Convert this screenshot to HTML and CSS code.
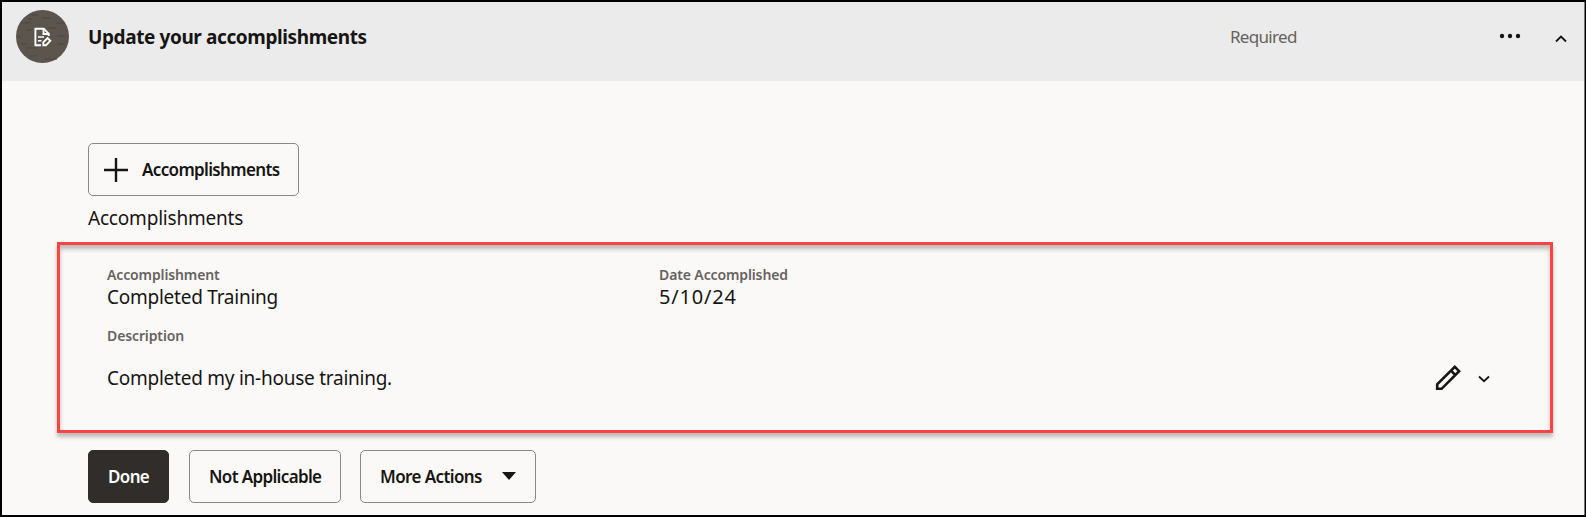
FILE: index.html
```html
<!DOCTYPE html>
<html lang="en">
  <head>
    <meta charset="UTF-8" />
    <title>Update your accomplishments</title>
    <link rel="stylesheet" href="styles.css">
  </head>
  <body>
  <div class="task">
    <header class="task-header">
      <svg class="task-icon" width="53" height="53" viewBox="0 0 53 53">
        <circle cx="26.500" cy="26.500" r="26.500" fill="#5b554e" />
        <g stroke="#4b463f" stroke-width="1.200" fill="none">
          <path d="M15 5h7M26 8h8M5 13h10M32 18h8M10 20h6M40 13h8M41 26h8M2 27h3M5 34h6M42 34h7M10 38h12M14 46h7M29 49h12M12 9h4" />
        </g>
        <g fill="none" stroke="#fff" stroke-width="1.900">
          <path d="M25 35.200H19.400V18.700H27.700L32.800 23.800V26" />
          <path d="M27.500 18.700V24H32.800" />
          <path d="M22 26.900h6M22 30.700h3.500" stroke-width="1.500" />
          <path d="M27.300 35.300V32.400L31.600 28.100L34.300 30.800L29.900 35.300Z" />
        </g>
      </svg>
      <h1 class="task-title">Update your accomplishments</h1>
      <span class="task-status">Required</span>
      <svg class="task-more" width="22" height="6" viewBox="0 0 22 6" fill="#161513">
        <circle cx="3" cy="3" r="2.200" /><circle cx="11" cy="3" r="2.200" /><circle cx="19" cy="3" r="2.200" />
      </svg>
      <svg class="task-toggle" width="12" height="8" viewBox="0 0 12 8">
        <path d="M1 6.500L6 1.500L11 6.500" />
      </svg>
    </header>

    <main class="task-body">
      <button class="btn btn-add">
        <svg width="24" height="24" viewBox="0 0 24 24"><path d="M12 0V24M0 12H24" stroke="#161513" stroke-width="2.400" /></svg>
        <span>Accomplishments</span>
      </button>
      <h2 class="section-title">Accomplishments</h2>

      <section class="record">
        <div class="record-fields">
          <div class="field">
            <div class="label">Accomplishment</div>
            <div class="value">Completed Training</div>
          </div>
          <div class="field">
            <div class="label">Date Accomplished</div>
            <div class="value value-date">5/10/24</div>
          </div>
        </div>
        <div class="label label-description">Description</div>
        <div class="record-row">
          <div class="value">Completed my in-house training.</div>
          <div class="record-actions">
            <svg class="pencil" width="26" height="26" viewBox="0 0 26 26">
              <path d="M2.200 23.800V19.400L19.800 1.900L24.100 6.200L6.600 23.800ZM16 5.700L20.300 10" />
            </svg>
            <svg class="chevron" width="12" height="8" viewBox="0 0 12 8">
              <path d="M1 1.500L6 6.200L11 1.500" />
            </svg>
          </div>
        </div>
      </section>

      <div class="actions">
        <button class="btn btn-done"><span>Done</span></button>
        <button class="btn btn-na"><span>Not Applicable</span></button>
        <button class="btn btn-menu"><span>More Actions</span>
          <svg width="14" height="8" viewBox="0 0 14 8"><path d="M0 0H14L7 8Z" fill="#161513" /></svg>
        </button>
      </div>
    </main>
  </div>
  </body>
</html>
```
FILE: styles.css
```css
* {
  box-sizing: border-box;
}
body {
  margin: 0;
  font-family: "Noto Sans", "Open Sans", sans-serif;
  color: #161513;
}
h1, h2 {
  margin: 0;
}
svg {
  display: block;
  flex: none;
}

.task {
  height: 517px;
  border: 2px solid #000;
  border-right-width: 1px;
  background-color: #fbf9f8;
  box-shadow: inset -1px 0 #777;
  white-space: nowrap;
}

/* header */
.task-header {
  display: flex;
  height: 79px;
  margin-right: 1px;
  padding: 8px 17px 0 14px;
  background-color: #ebebeb;
}
.task-title {
  width: 1142px;
  margin-left: 19px;
  padding-top: 13px;
  font-size: 19px;
  line-height: 28px;
  font-weight: 700;
  letter-spacing: -.4px;
}
.task-status {
  width: 269px;
  padding-top: 14px;
  font-size: 17px;
  line-height: 26px;
  letter-spacing: -.7px;
  color: #66625f;
}
.task-more {
  margin-top: 23px;
}
.task-toggle {
  margin: 25px 0 0 auto;
}
.task-toggle path,
.chevron path {
  fill: none;
  stroke: #161513;
  stroke-width: 1.8;
}

/* buttons */
.btn {
  display: flex;
  align-items: center;
  height: 53px;
  padding: 0 19px;
  border: 1px solid #8b8785;
  border-radius: 5px;
  background: transparent;
  font-family: inherit;
  font-size: 17px;
  line-height: 24px;
  font-weight: 600;
  letter-spacing: -.65px;
  color: #161513;
}
.btn-add {
  width: 211px;
  padding: 0 0 0 15px;
  gap: 14px;
}
.btn-add span {
  padding-top: 1px;
}
.btn-done {
  width: 81px;
  border-color: #312d2a;
  background-color: #312d2a;
  color: #fff;
}
.btn-na {
  width: 152px;
  margin-left: 20px;
}
.btn-menu {
  width: 176px;
  margin-left: 19px;
  justify-content: space-between;
  letter-spacing: -.6px;
}
.btn-menu svg {
  margin-bottom: 2px;
}

/* content */
.task-body {
  padding: 62px 31px 0 55px;
}
.task-body > .btn-add,
.section-title,
.actions {
  margin-left: 31px;
}
.section-title {
  height: 46px;
  padding-top: 8px;
  font-size: 19px;
  line-height: 28px;
  font-weight: 400;
  letter-spacing: -.2px;
}
.record {
  width: 1496px;
  height: 191px;
  padding: 20px 60px 0 47px;
  border: 3px solid #ff4343;
  box-shadow: 0 4px 4px rgba(0, 0, 0, .25), inset 0 4px 4px rgba(0, 0, 0, .25);
}
.record-fields {
  display: grid;
  grid-template-columns: 552px 1fr;
}
.label {
  font-size: 14px;
  line-height: 20px;
  font-weight: 600;
  letter-spacing: -.12px;
  color: #66625f;
}
.value {
  font-size: 19px;
  line-height: 24px;
  letter-spacing: -.25px;
}
.value-date {
  font-size: 20px;
  letter-spacing: .8px;
}
.label-description {
  margin-top: 17px;
}
.record-row {
  display: flex;
  justify-content: space-between;
  margin-top: 20px;
}
.record-actions {
  display: flex;
  gap: 17px;
  height: 26px;
  align-items: center;
}
.pencil {
  margin-top: -2px;
}
.pencil path {
  fill: none;
  stroke: #161513;
  stroke-width: 2.6;
}
.actions {
  display: flex;
  margin-top: 17px;
}
```
